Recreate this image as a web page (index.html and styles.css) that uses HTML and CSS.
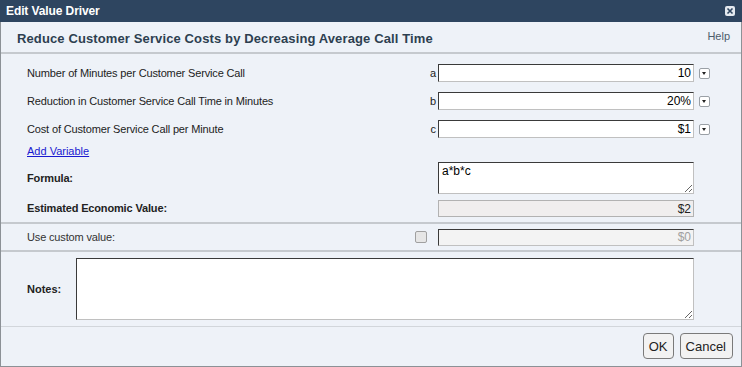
FILE: index.html
```html
<!DOCTYPE html>
<html>
<head>
    <title>Edit Value Driver</title>
    <link rel="stylesheet" href="styles.css">
</head>
<body>
    <div class="dialog">
        <div class="titlebar">
            <span>Edit Value Driver</span>
            <span class="close">
                <svg width="10" height="10" viewBox="0 0 10 10"><path d="M2.5 2.5 L7.5 7.5 M7.5 2.5 L2.5 7.5" stroke="#2e4560" stroke-width="1.6"/></svg>
            </span>
        </div>

        <div class="header">
            <h1>Reduce Customer Service Costs by Decreasing Average Call Time</h1>
            <a class="help">Help</a>
        </div>

        <div class="section vars">
            <div class="row var">
                <label>Number of Minutes per Customer Service Call</label>
                <span class="letter">a</span>
                <input type="text" class="field" value="10">
                <span class="drop"></span>
            </div>
            <div class="row var">
                <label>Reduction in Customer Service Call Time in Minutes</label>
                <span class="letter">b</span>
                <input type="text" class="field" value="20%">
                <span class="drop"></span>
            </div>
            <div class="row var">
                <label>Cost of Customer Service Call per Minute</label>
                <span class="letter">c</span>
                <input type="text" class="field" value="$1">
                <span class="drop"></span>
            </div>
            <div class="add"><a href="#">Add Variable</a></div>

            <div class="row formula">
                <label class="strong">Formula:</label>
                <textarea class="field area">a*b*c</textarea>
                <span class="spacer"></span>
            </div>
            <div class="row estimate">
                <label class="strong">Estimated Economic Value:</label>
                <input type="text" class="field readonly" value="$2" disabled>
                <span class="spacer"></span>
            </div>
        </div>

        <div class="section custom">
            <div class="row">
                <label>Use custom value:</label>
                <span class="check"></span>
                <input type="text" class="field off" value="$0" disabled>
                <span class="spacer"></span>
            </div>
        </div>

        <div class="section notes">
            <label class="strong">Notes:</label>
            <textarea class="field notes-area"></textarea>
        </div>

        <div class="footer">
            <button>OK</button>
            <button class="cancel">Cancel</button>
        </div>
    </div>
</body>
</html>
```

FILE: styles.css
```css
/* Page and dialog frame */
body {
    margin: 0;
    font-family: "Liberation Sans", Arial, sans-serif;
    background-color: #eef2f8;
}

.dialog {
    width: 740px;
    height: 366px;
    border-left: 1px solid #8c9196;
    border-right: 1px solid #8c9196;
    border-bottom: 1px solid #8c9196;
    background-color: #eef2f8;
    display: flex;
    flex-direction: column;
    color: #222;
}

/* Title bar */
.titlebar {
    height: 22px;
    margin: 0 -1px;
    background-color: #2e4560;
    color: #fff;
    font-size: 12px;
    font-weight: bold;
    letter-spacing: -0.1px;
    display: flex;
    justify-content: space-between;
    align-items: center;
    padding: 0 7px 0 6px;
}

    .titlebar .close {
        width: 10px;
        height: 10px;
        background-color: #e4e9ef;
        border-radius: 2px;
        display: flex;
    }

/* Header */
.header {
    height: 30px;
    border-bottom: 2px solid #c5c9ce;
    display: flex;
    justify-content: space-between;
    padding: 0 11px 0 16px;
}

    .header h1 {
        margin: 0;
        font-size: 13px;
        letter-spacing: 0.12px;
        color: #2d3f50;
        line-height: 33px;
    }

    .header .help {
        font-size: 11px;
        color: #4d5c6b;
        line-height: 28px;
    }

/* Sections */
.section {
    padding-left: 26px;
}

.vars {
    padding-top: 5px;
    padding-bottom: 5px;
    border-bottom: 2px solid #c5c9ce;
}

.row {
    display: flex;
    align-items: center;
    font-size: 11px;
}

    .row label {
        flex: 1;
        letter-spacing: -0.15px;
    }

.var {
    height: 28px;
}

.letter {
    width: 10px;
    text-align: right;
    margin-right: 2px;
}

.strong {
    font-weight: bold;
}

.field {
    box-sizing: border-box;
    width: 256px;
    border: 1px solid;
    border-color: #3a3a3a #c0c0c0 #c0c0c0 #3a3a3a;
    background-color: #fff;
    font-family: "Liberation Sans", Arial, sans-serif;
    font-size: 12px;
    padding: 0 2px;
    margin: 0;
    outline: none;
}

input.field {
    height: 18px;
    text-align: right;
}

.drop {
    width: 9px;
    height: 9px;
    margin: 0 31px 0 5px;
    border: 1px solid #9aa0a6;
    border-radius: 2px;
    background-color: #fff;
    position: relative;
}

    .drop::after {
        content: "";
        position: absolute;
        left: 2px;
        top: 3px;
        border-left: 2.5px solid transparent;
        border-right: 2.5px solid transparent;
        border-top: 3px solid #222;
    }

.spacer {
    width: 47px;
}

.add {
    height: 16px;
    line-height: 16px;
    font-size: 11px;
}

    .add a {
        color: #1a1ad0;
    }

.formula {
    margin-top: 3px;
}

.area {
    height: 32px;
    padding: 1px 3px;
    resize: vertical;
}

.estimate {
    margin-top: 6px;
}

    .estimate .field {
        height: 17px;
    }

    .estimate label {
        margin-top: -2px;
    }

.readonly {
    border-color: #b2b2b2;
    background-color: #f0eeee;
    color: #222;
}

/* Custom value */
.custom {
    height: 26px;
    display: flex;
    align-items: center;
    border-bottom: 2px solid #c5c9ce;
}

    .custom .row {
        flex: 1;
    }

    .custom label {
        color: #333;
    }

.check {
    width: 10px;
    height: 10px;
    border: 1px solid #a0a0a0;
    border-radius: 2px;
    background-color: #e6e6e6;
    margin-right: 11px;
}

.off {
    height: 17px !important;
    background-color: #f3f3f3;
    color: #a0a0a0;
}

/* Notes */
.notes {
    display: flex;
    align-items: center;
    padding-top: 6px;
    padding-bottom: 6px;
    border-bottom: 1px solid #d2d6db;
}

    .notes label {
        font-size: 11px;
        width: 49px;
    }

.notes-area {
    width: 618px;
    height: 62px;
    resize: vertical;
}

/* Footer */
.footer {
    flex: 1;
    display: flex;
    justify-content: flex-end;
    align-items: flex-start;
    padding: 6px 7px 0 0;
    gap: 6px;
}

    .footer button {
        height: 26px;
        padding: 0 5px;
        font-family: "Liberation Sans", Arial, sans-serif;
        font-size: 13px;
        color: #222;
        background-color: #f2f2f2;
        border: 1px solid #7a7a7a;
        border-radius: 4px;
    }

    .footer .cancel {
        padding: 0 6px 0 5px;
        margin-right: 1px;
    }
```
